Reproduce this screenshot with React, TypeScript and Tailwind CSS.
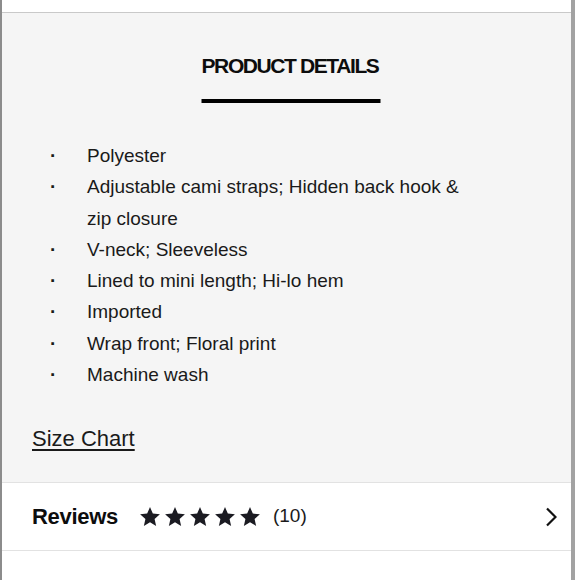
const details = [
  'Polyester',
  'Adjustable cami straps; Hidden back hook & zip closure',
  'V-neck; Sleeveless',
  'Lined to mini length; Hi-lo hem',
  'Imported',
  'Wrap front; Floral print',
  'Machine wash',
]

function Star() {
  return (
    <svg width="22" height="22" viewBox="0 0 24 24" className="text-[#1b1b22]">
      <path
        fill="currentColor"
        d="M12 1.2l3.1 7.1 7.7.7-5.8 5.1 1.7 7.6L12 17.7l-6.7 4 1.7-7.6L1.2 9l7.7-.7z"
      />
    </svg>
  )
}

export default function App() {
  return (
    <div className="relative w-[580px] h-[580px] overflow-hidden bg-white font-['Liberation_Sans',Arial,sans-serif] text-[#1a1a1a]">
      <div className="h-[13px] border-b border-[#c9c9c9] bg-white" />

      <section className="h-[470px] border-b border-[#e2e2e2] bg-[#f5f5f5] pt-[41px]">
        <h2 className="text-center text-[21px] leading-[24px] font-bold tracking-[-1.4px] text-[#0d0d0d]">
          PRODUCT DETAILS
        </h2>
        <div className="mx-auto mt-[21px] h-[4px] w-[179px] translate-x-[0.5px] bg-black" />

        <ul className="ml-[50px] mt-[37px] w-[417px] text-[19px] leading-[31.3px]">
          {details.map((d) => (
            <li key={d} className="flex">
              <span className="w-[37px] shrink-0 font-bold">·</span>
              <span>{d}</span>
            </li>
          ))}
        </ul>

        <a href="#" className="ml-[32px] mt-[36px] inline-block text-[22px] leading-[26px] underline underline-offset-[3px] decoration-[1.5px]">
          Size Chart
        </a>
      </section>

      <div className="flex h-[68px] items-center border-b border-[#e2e2e2] pl-[32px] pr-[23px]">
        <span className="text-[22px] font-bold tracking-[-0.3px] text-[#0d0d0d]">Reviews</span>
        <div className="ml-[21px] flex gap-[3px]">
          <Star />
          <Star />
          <Star />
          <Star />
          <Star />
        </div>
        <span className="ml-[12px] text-[19px]">(10)</span>
        <svg width="12" height="20" viewBox="0 0 12 20" className="ml-auto">
          <path d="M2 1.5L10.5 10L2 18.5" fill="none" stroke="#111" strokeWidth="2.2" />
        </svg>
      </div>

      {/* frame edges drawn over the page */}
      <div className="absolute left-0 top-0 h-full w-[2px] bg-[#8c8c8c]" />
      <div className="absolute right-0 top-0 flex h-full w-[9px]">
        <div className="w-[4px] bg-[#a2a2a2]" />
        <div className="flex-1 bg-white" />
      </div>
    </div>
  )
}
